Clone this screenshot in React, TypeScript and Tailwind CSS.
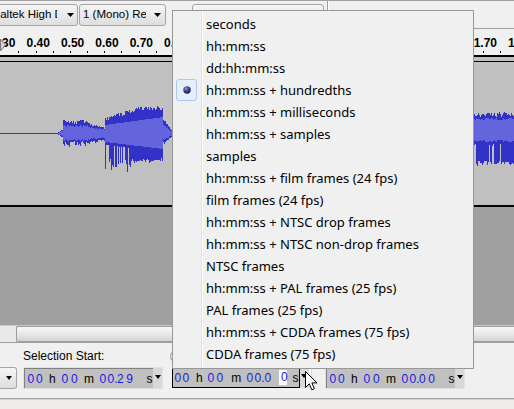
import React from 'react';

type Kind = 'd' | 'l' | 'f';
type Glyph = [string, number, Kind];

const MENU_ITEMS = [
  'seconds',
  'hh:mm:ss',
  'dd:hh:mm:ss',
  'hh:mm:ss + hundredths',
  'hh:mm:ss + milliseconds',
  'hh:mm:ss + samples',
  'samples',
  'hh:mm:ss + film frames (24 fps)',
  'film frames (24 fps)',
  'hh:mm:ss + NTSC drop frames',
  'hh:mm:ss + NTSC non-drop frames',
  'NTSC frames',
  'hh:mm:ss + PAL frames (25 fps)',
  'PAL frames (25 fps)',
  'hh:mm:ss + CDDA frames (75 fps)',
  'CDDA frames (75 fps)',
];
const CHECKED = 3;

// glyph, left offset inside the text area, kind
const START_SEL: Glyph[] = [
  ['0', 2.5, 'd'],
  ['0', 11.1, 'd'],
  ['h', 24.1, 'l'],
  ['0', 36.4, 'd'],
  ['0', 45.9, 'd'],
  ['m', 59.1, 'l'],
  ['0', 74.4, 'd'],
  ['0', 82.4, 'd'],
  ['.', 89.2, 'd'],
  ['2', 92.1, 'd'],
  ['9', 101.4, 'd'],
  ['s', 121.6, 'l'],
];
const ZERO_SEL: Glyph[] = START_SEL.map(([t, x, k]) => [t === '2' || t === '9' ? '0' : t, x, k]);
const FOCUS_SEL: Glyph[] = [
  ['0', 1.5, 'd'],
  ['0', 9.5, 'd'],
  ['h', 23.1, 'l'],
  ['0', 34.5, 'd'],
  ['0', 43.5, 'd'],
  ['m', 58.2, 'l'],
  ['0', 73.5, 'd'],
  ['0', 81.5, 'd'],
  ['.', 88.2, 'd'],
  ['0', 91.5, 'd'],
  ['0', 106, 'f'],
  ['s', 119.6, 'l'],
];

// labels that are not under the popup
const RULER = [3, 4, 5, 6, 7, 8, 17, 18];

function buildWave() {
  let s = 98765;
  const r = () => {
    s = (s * 16807) % 2147483647;
    return s / 2147483647;
  };
  const C = 71;
  let dark = '';
  let light = '';
  for (let x = 0; x < 514; x++) {
    const a = r();
    const b = r();
    const c = r();
    let pt = 0;
    let pb = 0;
    let rt = 0;
    let rb = 0;
    if (x < 58) {
      dark += `M${x} ${C}h1v1h-1z`;
      continue;
    }
    if (x < 63) {
      const k = (x - 57) / 6;
      pt = k * 4;
      pb = k * 4;
      rt = pt * 0.6;
      rb = pb * 0.5;
    } else if (x < 88) {
      pt = 9 + a * 5;
      pb = 8 + b * 8;
      rt = 6 + c * 2;
      rb = 5 + c * 2;
      if (b > 0.72) pb = rb + 2;
    } else if (x < 105) {
      const k = (x - 88) / 17;
      pt = 8 - k * 4 + a * 2;
      pb = 7 - k * 2 + b * 3;
      rt = pt * 0.65;
      rb = pb * 0.6;
    } else if (x < 163) {
      const k = (x - 105) / 58;
      pt = 12 + Math.min(1, k * 1.6) * 11 + a * 4;
      pb = x < 133 ? 16 + b * 22 : 24 + b * 5;
      rt = 8 + k * 8;
      rb = 8 + k * 7;
      if (x < 133 && b < 0.3) pb = rb + 3;
    } else if (x < 172) {
      const k = (172 - x) / 9;
      pt = 2 + k * 14 * (0.6 + a * 0.4);
      pb = 2 + k * 10 * (0.6 + b * 0.4);
      rt = pt * 0.6;
      rb = pb * 0.6;
    } else if (x < 474) {
      pt = 18;
      pb = 25;
      rt = 12;
      rb = 8;
    } else {
      pt = 16 + a * 5;
      pb = 25 + b * 7;
      rt = 13 + c * 2;
      rb = 6 + c * 2;
      if (b < 0.25) pb = rb + 4;
    }
    dark += `M${x} ${Math.round(C - pt)}h1V${Math.round(C + 1 + pb)}h-1z`;
    light += `M${x} ${Math.round(C - rt)}h1V${Math.round(C + 1 + rb)}h-1z`;
  }
  return { dark, light };
}

const WAVE = buildWave();

function DownArrow({ w = 7, h = 4 }: { w?: number; h?: number }) {
  return (
    <svg width={w} height={h} viewBox={`0 0 ${w} ${h}`} className="block shrink-0">
      <path d={`M0 0H${w}L${w / 2} ${h}Z`} fill="#000" />
    </svg>
  );
}

function Cells({ glyphs, end }: { glyphs: Glyph[]; end: number }) {
  return (
    <div
      className="flex h-full items-center whitespace-nowrap text-[12px] leading-none"
      style={{ paddingLeft: glyphs[0][1] }}
    >
      {glyphs.map(([t, x, k], i) => {
        const w = (i + 1 < glyphs.length ? glyphs[i + 1][1] : end) - x;
        if (k === 'f') {
          return (
            <span key={i} className="flex shrink-0 items-center" style={{ width: w }}>
              <span className="block h-[15px] w-[8px] bg-white pl-[2px] leading-[15px] text-[#1a1ae0]">{t}</span>
            </span>
          );
        }
        return (
          <span key={i} className={k === 'd' ? 'shrink-0 text-[#1a1ae0]' : 'shrink-0 text-black'} style={{ width: w }}>
            {t}
          </span>
        );
      })}
    </div>
  );
}

function TimeCtrl({ glyphs }: { glyphs: Glyph[] }) {
  return (
    <div className="flex h-[22px] w-[140px] border border-[#e2e2e2]">
      <div className="w-[129px] border-l border-t border-[#808080] bg-[#c0c0c0]">
        <Cells glyphs={glyphs} end={128} />
      </div>
      <div className="flex w-[9px] justify-center bg-[#d8d8d8] pt-[7px]">
        <DownArrow w={6} h={4} />
      </div>
    </div>
  );
}

function FocusTimeCtrl() {
  return (
    <div className="flex h-[22px] w-[140px]">
      <div className="h-[21px] w-[128px] border border-black bg-[#c0c0c0]">
        <Cells glyphs={FOCUS_SEL} end={126} />
      </div>
      <div className="flex h-[21px] w-[8px] justify-center bg-[#d8d8d8] pt-[7px]">
        <DownArrow w={6} h={4} />
      </div>
      <div className="h-[21px] flex-1 border border-[#d8d8d8] bg-[#fafafa]" />
    </div>
  );
}

function Combo({ children, className }: { children: React.ReactNode; className: string }) {
  return (
    <div
      className={`flex h-[22px] shrink-0 items-center rounded-[3px] border border-[#a5a5a5] bg-linear-to-b from-[#f5f5f5] to-[#dedede] text-[11.5px] ${className}`}
    >
      {children}
    </div>
  );
}

export default function App() {
  return (
    <div className="relative h-[409px] w-[514px] overflow-hidden bg-[#f0f0f0] font-['Liberation_Sans',Arial,sans-serif] text-[12px] text-black select-none">
      {/* device toolbar */}
      <div className="flex h-[29px] border-t border-[#a0a0a0]">
        <div className="flex w-[327px] shrink-0 overflow-hidden pt-[3px]">
          <Combo className="-ml-[20px] w-[98px]">
            <div className="w-[76px] overflow-hidden whitespace-nowrap pl-[4.5px] leading-none">
              Realtek High Definition Audio
            </div>
            <div className="ml-[10px]">
              <DownArrow />
            </div>
          </Combo>
          <Combo className="ml-[1px] w-[87px]">
            <div className="w-[66px] overflow-hidden whitespace-nowrap pl-[3px] leading-none">
              1 (Mono) Recording Channel
            </div>
            <div className="ml-[8px]">
              <DownArrow />
            </div>
          </Combo>
          <svg width="18" height="18" viewBox="0 0 18 18" className="ml-[4px] mt-[2px] shrink-0">
            <path d="M2 7h3l4-3v10l-4-3H2z" fill="#6a6a6a" />
            <path d="M11 5.5q2 1.5 0 5" stroke="#555" strokeWidth="1.2" fill="none" />
          </svg>
          <Combo className="ml-[4px] w-[132px]">
            <div className="w-[108px] overflow-hidden whitespace-nowrap pl-[4px] leading-none">
              Reproduktory (Realtek High Definition Audio)
            </div>
            <div className="ml-[10px]">
              <DownArrow />
            </div>
          </Combo>
        </div>
        <div className="w-px bg-[#a0a0a0]" />
        <div className="w-px bg-white" />
        <div className="flex-1 border-b border-[#a0a0a0]" />
      </div>

      {/* time ruler */}
      <div className="relative h-[26px] overflow-hidden">
        <svg width="514" height="26" className="absolute left-0 top-0" shapeRendering="crispEdges">
          {Array.from({ length: 30 }, (_, k) => (
            <rect key={k} x={Math.round(18.3 + 17.2 * k)} y={22} width={1} height={2} fill="#000" />
          ))}
        </svg>
        {RULER.map((v) => (
          <span
            key={v}
            className="absolute top-[8px] whitespace-nowrap text-[12px] font-bold leading-none"
            style={{ left: 26.5 + (v - 4) * 34.4 }}
          >
            {(v / 10).toFixed(2)}
          </span>
        ))}
        <svg width="7" height="14" viewBox="0 0 7 14" className="absolute left-0 top-[9px]">
          <polygon points="0.5,1 5.5,7 0.5,13" fill="#d4d4d4" stroke="#7a7a7a" strokeWidth="1" />
        </svg>
      </div>
      <div className="h-[2px] bg-black" />
      <div className="h-[4px] bg-[#c0c0c0]" />
      <div className="h-px bg-black" />

      {/* wave track */}
      <svg width="514" height="143" className="block bg-[#c0c0c0]" shapeRendering="crispEdges">
        <path d={WAVE.dark} fill="#3232c8" />
        <path d={WAVE.light} fill="#6464dc" />
      </svg>
      <div className="h-[2px] bg-black" />
      <div className="h-[118px] bg-[#a0a0a0]" />

      {/* horizontal scrollbar */}
      <div className="flex h-[18px] border-b border-t border-b-[#a0a0a0] border-t-[#c8c8c8] bg-[#e9e9e9]">
        <div className="w-[16px] shrink-0" />
        <div className="flex-1 rounded-l-[2px] border border-r-0 border-[#9c9c9c] bg-linear-to-b from-[#f7f7f7] via-[#e8e8e8] to-[#d3d3d3]" />
      </div>

      {/* selection toolbar */}
      <div className="flex h-[55px]">
        <div className="mt-[24px] flex h-[22px] w-[17px] shrink-0 items-center justify-center rounded-r-[3px] border border-l-0 border-[#a5a5a5] bg-linear-to-b from-[#f5f5f5] to-[#dedede] pl-[1px]">
          <DownArrow w={6} h={4} />
        </div>
        <div className="ml-[6px] flex w-[140px] shrink-0 flex-col">
          <div className="h-[24px] whitespace-nowrap pt-[7px] leading-none">Selection Start:</div>
          <TimeCtrl glyphs={START_SEL} />
        </div>
        <div className="ml-[9px] flex w-[140px] shrink-0 flex-col">
          <div className="h-[24px] pt-[7px]">
            <div className="-ml-[2px] h-[13px] w-[13px] rounded-full border border-[#8e8f8f] bg-[#f4f4f4]" />
          </div>
          <FocusTimeCtrl />
        </div>
        <div className="ml-[13px] flex w-[140px] shrink-0 flex-col">
          <div className="h-[24px]" />
          <TimeCtrl glyphs={ZERO_SEL} />
        </div>
      </div>

      {/* status bar */}
      <div className="h-px bg-[#a0a0a0]" />
      <div className="h-px bg-[#d4d4d4]" />
      <div className="h-[9px] bg-[#efecea]" />

      {/* open time-format popup menu */}
      <div className="absolute left-[172px] top-[10px] h-[359px] w-[302px] border border-[#979797] bg-[#f0f0f0] pt-[2px] font-['Noto_Sans',sans-serif] text-[13px] text-black">
        <div className="absolute bottom-0 left-[28px] top-0 w-px bg-[#e2e3e3]" />
        <div className="absolute bottom-0 left-[29px] top-0 w-px bg-white" />
        {MENU_ITEMS.map((item, i) => (
          <div key={item} className="relative flex h-[22px] items-center">
            <div className="flex h-[22px] w-[30px] shrink-0 items-center">
              {i === CHECKED && (
                <div className="ml-[3px] flex h-[22px] w-[21px] items-center justify-center rounded-[3px] border border-[#a9c9ef] bg-[#e6eefa]">
                  <svg width="8" height="8" viewBox="0 0 8 8">
                    <defs>
                      <radialGradient id="bul" cx="0.38" cy="0.32" r="0.7">
                        <stop offset="0" stopColor="#9a9ad8" />
                        <stop offset="0.55" stopColor="#3a3a8a" />
                        <stop offset="1" stopColor="#1c1c50" />
                      </radialGradient>
                    </defs>
                    <circle cx="4" cy="4" r="3.7" fill="url(#bul)" />
                  </svg>
                </div>
              )}
            </div>
            <span className="whitespace-nowrap pl-[3px] leading-none">{item}</span>
          </div>
        ))}
      </div>

      {/* mouse pointer */}
      <svg width="13" height="21" viewBox="0 0 13 21" className="absolute left-[305px] top-[371px]">
        <path
          d="M0.5 0.5V16.5L4.3 12.8L6.8 18.8L9.3 17.7L6.9 11.9H12Z"
          fill="#fff"
          stroke="#000"
          strokeWidth="1"
          strokeLinejoin="miter"
        />
      </svg>
    </div>
  );
}
